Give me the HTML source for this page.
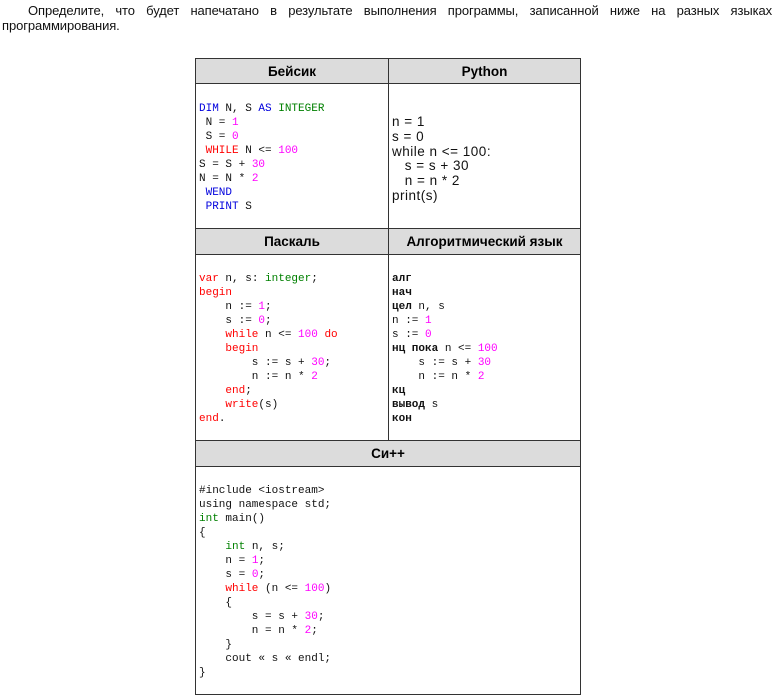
<!DOCTYPE html>
<html><head><meta charset="utf-8">
<style>
body{margin:0;width:774px;height:699px;background:#fff;position:relative;overflow:hidden;font-family:"Liberation Sans",sans-serif;color:#000}
.intro{position:absolute;left:2px;top:3px;width:770px;font-size:13px;line-height:15px;text-align:justify;text-indent:26px;color:#111;letter-spacing:-0.1px}
.box{position:absolute;border:1px solid #333;box-sizing:border-box}
.hd{position:absolute;background:#dcdcdc;font-weight:bold;font-size:13.5px;text-align:center;line-height:25px;box-sizing:border-box}
pre{position:absolute;margin:0;font-family:"Liberation Mono",monospace;font-size:11px;line-height:14px;color:#111}
.b{color:#0000dd}.r{color:#ff0000}.m{color:#ff00ff}.g{color:#008000}.k{font-weight:bold}
.py{position:absolute;font-size:13.5px;line-height:14.8px;white-space:pre;color:#111;letter-spacing:0.5px}
.line{position:absolute;background:#333}
</style></head><body>
<div class="intro">Определите, что будет напечатано в результате выполнения программы, записанной ниже на разных языках программирования.</div>

<div class="box" style="left:195px;top:58px;width:386px;height:637px"></div>
<div class="hd" style="left:196px;top:59px;width:192px;height:24px">Бейсик</div>
<div class="hd" style="left:389px;top:59px;width:191px;height:24px">Python</div>
<div class="hd" style="left:196px;top:229px;width:192px;height:25px">Паскаль</div>
<div class="hd" style="left:389px;top:229px;width:191px;height:25px">Алгоритмический язык</div>
<div class="hd" style="left:196px;top:441px;width:384px;height:25px">Си++</div>
<div class="line" style="left:195px;top:83px;width:386px;height:1px"></div>
<div class="line" style="left:195px;top:228px;width:386px;height:1px"></div>
<div class="line" style="left:195px;top:254px;width:386px;height:1px"></div>
<div class="line" style="left:195px;top:440px;width:386px;height:1px"></div>
<div class="line" style="left:195px;top:466px;width:386px;height:1px"></div>
<div class="line" style="left:388px;top:58px;width:1px;height:382px"></div>

<pre style="left:199px;top:102px"><span class="b">DIM</span> N, S <span class="b">AS</span> <span class="g">INTEGER</span>
 N = <span class="m">1</span>
 S = <span class="m">0</span>
 <span class="r">WHILE</span> N &lt;= <span class="m">100</span>
S = S + <span class="m">30</span>
N = N * <span class="m">2</span>
 <span class="b">WEND</span>
 <span class="b">PRINT</span> S</pre>

<div class="py" style="left:392px;top:115px">n = 1
s = 0
while n &lt;= 100:
   s = s + 30
   n = n * 2
print(s)</div>

<pre style="left:199px;top:272px"><span class="r">var</span> n, s: <span class="g">integer</span>;
<span class="r">begin</span>
    n := <span class="m">1</span>;
    s := <span class="m">0</span>;
    <span class="r">while</span> n &lt;= <span class="m">100</span> <span class="r">do</span>
    <span class="r">begin</span>
        s := s + <span class="m">30</span>;
        n := n * <span class="m">2</span>
    <span class="r">end</span>;
    <span class="r">write</span>(s)
<span class="r">end</span>.</pre>

<pre style="left:392px;top:272px"><span class="k">алг</span>
<span class="k">нач</span>
<span class="k">цел</span> n, s
n := <span class="m">1</span>
s := <span class="m">0</span>
<span class="k">нц пока</span> n &lt;= <span class="m">100</span>
    s := s + <span class="m">30</span>
    n := n * <span class="m">2</span>
<span class="k">кц</span>
<span class="k">вывод</span> s
<span class="k">кон</span></pre>

<pre style="left:199px;top:484px">#include &lt;iostream&gt;
using namespace std;
<span class="g">int</span> main()
{
    <span class="g">int</span> n, s;
    n = <span class="m">1</span>;
    s = <span class="m">0</span>;
    <span class="r">while</span> (n &lt;= <span class="m">100</span>)
    {
        s = s + <span class="m">30</span>;
        n = n * <span class="m">2</span>;
    }
    cout « s « endl;
}</pre>
</body></html>
